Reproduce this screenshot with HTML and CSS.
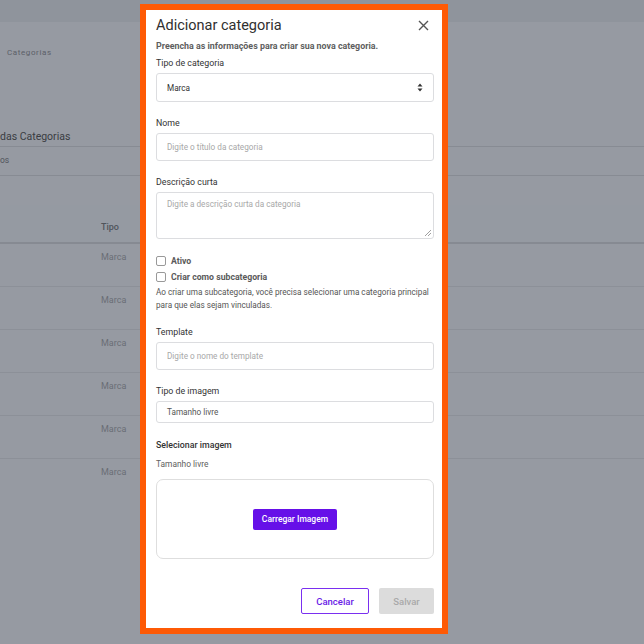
FILE: index.html
```html
<!DOCTYPE html>
<html lang="pt-BR">

<head>
    <meta charset="UTF-8" />
    <meta name="viewport" content="width=device-width, initial-scale=1.0" />
    <title>Categorias</title>
    <link rel="stylesheet" href="styles.css">
</head>

<body>
    <div class="page">
        <div class="topbar"></div>
        <div class="breadcrumb">Categorias</div>

        <div class="section-title">das Categorias</div>
        <div class="tabs">os</div>

        <div class="table">
            <div class="table-head">
                <span class="col-type">Tipo</span>
            </div>
            <div class="table-row"><span class="col-type">Marca</span></div>
            <div class="table-row"><span class="col-type">Marca</span></div>
            <div class="table-row"><span class="col-type">Marca</span></div>
            <div class="table-row"><span class="col-type">Marca</span></div>
            <div class="table-row"><span class="col-type">Marca</span></div>
            <div class="table-row last"><span class="col-type">Marca</span></div>
        </div>
    </div>

    <div class="modal">
        <div class="modal-header">
            <h2>Adicionar categoria</h2>
            <button class="close" aria-label="Fechar">
                <svg width="11" height="11" viewBox="0 0 11 11">
                    <path d="M1 1L10 10M10 1L1 10" stroke="#555" stroke-width="1.4" fill="none" />
                </svg>
            </button>
        </div>
        <p class="subtitle">Preencha as informações para criar sua nova categoria.</p>

        <label class="field-label">Tipo de categoria</label>
        <div class="select">
            <span>Marca</span>
            <svg width="6" height="9" viewBox="0 0 6 9">
                <path d="M3 0.5L5.5 3.5H0.5Z M3 8.5L5.5 5.5H0.5Z" fill="#333" />
            </svg>
        </div>

        <label class="field-label spaced">Nome</label>
        <div class="input placeholder">Digite o título da categoria</div>

        <label class="field-label spaced">Descrição curta</label>
        <div class="textarea placeholder">
            Digite a descrição curta da categoria
            <svg class="grip" width="6" height="6" viewBox="0 0 6 6">
                <path d="M6 0L0 6M6 3L3 6" stroke="#888" stroke-width="0.8" />
            </svg>
        </div>

        <div class="checks">
            <label class="check"><span class="box"></span>Ativo</label>
            <label class="check"><span class="box"></span>Criar como subcategoria</label>
        </div>
        <p class="help">Ao criar uma subcategoria, você precisa selecionar uma categoria principal para que elas sejam vinculadas.</p>

        <label class="field-label after-help">Template</label>
        <div class="input placeholder">Digite o nome do template</div>

        <label class="field-label spaced">Tipo de imagem</label>
        <div class="input short">Tamanho livre</div>

        <label class="field-label upload-label">Selecionar imagem</label>
        <p class="hint">Tamanho livre</p>
        <div class="upload">
            <button class="btn-upload">Carregar Imagem</button>
        </div>

        <div class="modal-footer">
            <button class="btn-cancel">Cancelar</button>
            <button class="btn-save" disabled>Salvar</button>
        </div>
    </div>
</body>

</html>
```

FILE: styles.css
```css
html,
body {
    height: 100%;
    margin: 0;
    font-family: Roboto, "Liberation Sans", sans-serif;
}

body {
    background: #969aa2;
    overflow: hidden;
    position: relative;
}

/* page behind the overlay */
.page {
    color: #50545b;
}

.topbar {
    height: 22px;
    background: #8f949c;
}

.breadcrumb {
    padding: 26px 0 0 7px;
    font-size: 8px;
    letter-spacing: 0.6px;
    color: #5c6068;
    height: 62px;
}

.section-title {
    margin-top: 20px;
    font-size: 10.5px;
    color: #3a3d43;
    padding-bottom: 3px;
    border-bottom: 1px solid #878b93;
}

.tabs {
    font-size: 8.5px;
    color: #50545b;
    height: 28px;
    line-height: 27px;
    border-bottom: 1px solid #878b93;
}

.table {
    margin-top: 29px;
}

.table-head {
    height: 37px;
    line-height: 44px;
    font-size: 9px;
    font-weight: 500;
    background: #959aa2;
    border-bottom: 2px solid #868a92;
}

.table-row {
    height: 42px;
    border-bottom: 1px solid #8c9098;
    font-size: 9px;
    color: #6a6e76;
}

.table-row.last {
    border-bottom: none;
}

.col-type {
    display: inline-block;
    margin-left: 101px;
}

.table-row .col-type {
    padding-top: 8px;
}

/* modal */
.modal {
    position: absolute;
    left: 146px;
    top: 10px;
    width: 296px;
    height: 618px;
    box-sizing: border-box;
    padding: 0 8px 0 10px;
    background: #fff;
    outline: 6px solid #fe5a05;
    color: #333;
    display: flex;
    flex-direction: column;
}

.modal-header {
    display: flex;
    align-items: center;
    justify-content: space-between;
    height: 30px;
}

.modal-header h2 {
    margin: 0;
    font-size: 14.5px;
    font-weight: 400;
    color: #2f2f2f;
}

.close {
    border: none;
    background: none;
    padding: 0;
    margin-right: 5px;
    display: flex;
}

.subtitle {
    margin: 1px 0 0;
    font-size: 8.9px;
    font-weight: 700;
    color: #5e5e5e;
}

.field-label {
    display: block;
    font-size: 8.8px;
    color: #333;
    margin: 7px 0 5px;
}

.field-label.spaced {
    margin-top: 16px;
}

.field-label.after-help {
    margin-top: 15px;
}

.field-label.upload-label {
    margin-top: 17px;
    font-weight: 500;
}

.select,
.input,
.textarea {
    box-sizing: border-box;
    border: 1px solid #dcdde0;
    border-radius: 3px;
    font-size: 8.2px;
    padding: 0 10px;
    color: #333;
}

.select {
    height: 29px;
    display: flex;
    align-items: center;
    justify-content: space-between;
}

.input {
    height: 28px;
    display: flex;
    align-items: center;
}

.input.short {
    height: 22px;
    color: #555;
}

.placeholder {
    color: #a8a8a8;
}

.textarea {
    height: 47px;
    padding-top: 6px;
    position: relative;
}

.grip {
    position: absolute;
    right: 2px;
    bottom: 2px;
}

.checks {
    margin-top: 17px;
    display: flex;
    flex-direction: column;
    gap: 6px;
}

.check {
    display: flex;
    align-items: center;
    gap: 5px;
    font-size: 8.7px;
    font-weight: 700;
    color: #5a5a5a;
}

.box {
    width: 8px;
    height: 8px;
    border: 1px solid #999;
    border-radius: 2px;
    background: #fff;
}

.help {
    margin: 4px 0 0;
    font-size: 8.2px;
    line-height: 13px;
    color: #555;
}

.hint {
    margin: 4px 0 10px;
    font-size: 8.4px;
    color: #606060;
}

.upload {
    height: 80px;
    box-sizing: border-box;
    border: 1px solid #dedede;
    border-radius: 7px;
    display: flex;
    align-items: center;
    justify-content: center;
}

.btn-upload {
    background: #6610e8;
    color: #fff;
    border: none;
    border-radius: 2px;
    font-family: inherit;
    font-size: 8.5px;
    font-weight: 500;
    padding: 0 9px;
    height: 21px;
}

.modal-footer {
    margin-top: auto;
    margin-bottom: 14px;
    display: flex;
    justify-content: flex-end;
    gap: 10px;
}

.btn-cancel,
.btn-save {
    height: 26px;
    border-radius: 2px;
    font-family: inherit;
    font-size: 9.5px;
    font-weight: 500;
}

.btn-cancel {
    width: 68px;
    background: #fff;
    border: 1px solid #7a2ff0;
    color: #6a1be6;
}

.btn-save {
    width: 55px;
    background: #dcdcdc;
    border: none;
    color: #a9a9a9;
}
```
